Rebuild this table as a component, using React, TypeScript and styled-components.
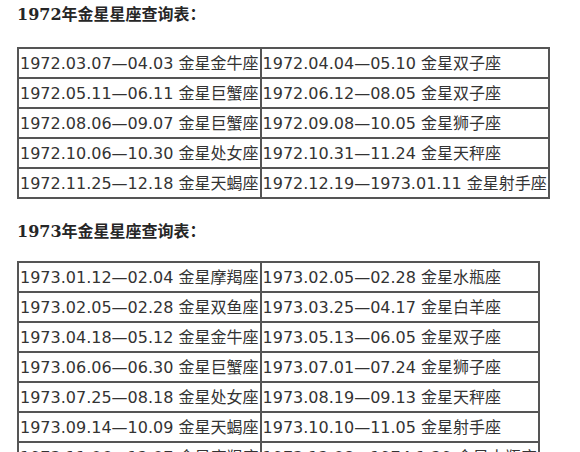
import React, { FC } from "react";
import styled, { createGlobalStyle } from "styled-components";

const GlobalStyle = createGlobalStyle`
  html, body {
    margin: 0;
    padding: 0;
    background: #fff;
  }
`;

const Page = styled.div`
  padding: 0 17px;
  color: #333;
`;

const Title = styled.p<{ first?: boolean }>`
  margin: ${(props) => (props.first ? "0" : "18px")} 0 0;
  font-family: "DejaVu Serif", "Noto Sans CJK SC", serif;
  font-weight: bold;
  font-size: 16px;
  line-height: 26px;
  color: #262626;
  span {
    font-family: "Noto Sans CJK SC", sans-serif;
  }
`;

const Table = styled.table<{ gap: number }>`
  margin-top: ${(props) => props.gap}px;
  border-collapse: collapse;
  border: 2px solid #555;
  font-family: "DejaVu Sans", "Noto Sans CJK SC", sans-serif;
  font-size: 16px;
  color: #333;

  td {
    border: 2px solid #555;
    padding: 0 1px;
    height: 26.4px;
    line-height: 26px;
    white-space: nowrap;
  }
`;

const Sign = styled.span`
  font-family: "Noto Sans CJK SC", sans-serif;
`;

type Entry = [string, string];

const year1972: Entry[][] = [
  [["1972.03.07—04.03", "金星金牛座"], ["1972.04.04—05.10", "金星双子座"]],
  [["1972.05.11—06.11", "金星巨蟹座"], ["1972.06.12—08.05", "金星双子座"]],
  [["1972.08.06—09.07", "金星巨蟹座"], ["1972.09.08—10.05", "金星狮子座"]],
  [["1972.10.06—10.30", "金星处女座"], ["1972.10.31—11.24", "金星天秤座"]],
  [["1972.11.25—12.18", "金星天蝎座"], ["1972.12.19—1973.01.11", "金星射手座"]],
];

const year1973: Entry[][] = [
  [["1973.01.12—02.04", "金星摩羯座"], ["1973.02.05—02.28", "金星水瓶座"]],
  [["1973.02.05—02.28", "金星双鱼座"], ["1973.03.25—04.17", "金星白羊座"]],
  [["1973.04.18—05.12", "金星金牛座"], ["1973.05.13—06.05", "金星双子座"]],
  [["1973.06.06—06.30", "金星巨蟹座"], ["1973.07.01—07.24", "金星狮子座"]],
  [["1973.07.25—08.18", "金星处女座"], ["1973.08.19—09.13", "金星天秤座"]],
  [["1973.09.14—10.09", "金星天蝎座"], ["1973.10.10—11.05", "金星射手座"]],
  [["1973.11.06—12.07", "金星摩羯座"], ["1973.12.08—1974.1.29", "金星水瓶座"]],
];

const VenusTable: FC<{ rows: Entry[][]; gap: number }> = ({ rows, gap }) => (
  <Table gap={gap}>
    <tbody>
      {rows.map((row, i) => (
        <tr key={i}>
          {row.map(([date, sign], j) => (
            <td key={j}>
              {date} <Sign>{sign}</Sign>
            </td>
          ))}
        </tr>
      ))}
    </tbody>
  </Table>
);

const App: FC = () => {
  return (
    <>
      <GlobalStyle />
      <Page>
        <Title first>
          1972<span>年金星星座查询表：</span>
        </Title>
        <VenusTable rows={year1972} gap={19} />
        <Title>
          1973<span>年金星星座查询表：</span>
        </Title>
        <VenusTable rows={year1973} gap={16} />
      </Page>
    </>
  );
};

export default App;
